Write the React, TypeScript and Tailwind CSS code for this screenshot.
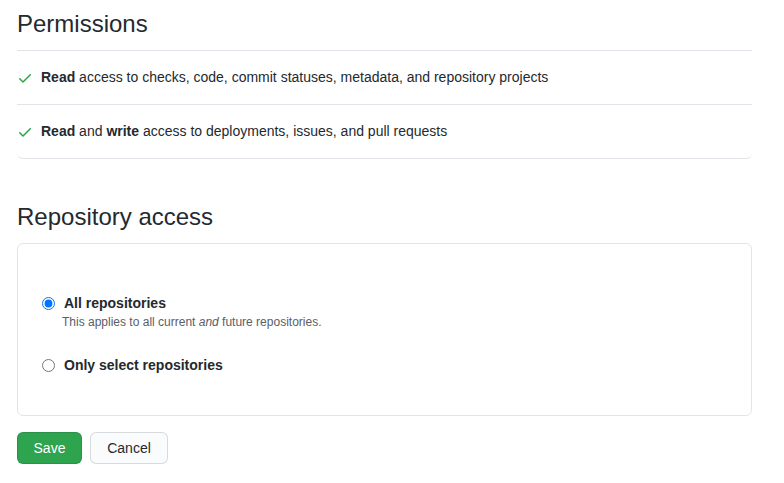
import React from "react";

const CheckIcon: React.FC = () => (
  <svg
    width="16"
    height="16"
    viewBox="0 0 16 16"
    className="shrink-0 text-[#28a745]"
    fill="currentColor"
  >
    <path d="M13.78 4.22a.75.75 0 0 1 0 1.06l-7.25 7.25a.75.75 0 0 1-1.06 0L2.22 9.28a.75.75 0 0 1 1.06-1.06L6 10.94l6.72-6.72a.75.75 0 0 1 1.06 0Z" />
  </svg>
);

const App: React.FC = () => {
  return (
    <div
      className="w-[784px] bg-white px-[17px] text-[14px] text-[#24292e]"
      style={{ fontFamily: '"Liberation Sans", Arial, sans-serif' }}
    >
      <div className="w-[735px]">
        <div className="flex h-[51px] items-start border-b border-[#e1e4e8] pt-[9px]">
          <h2 className="text-[24px] leading-[30px] font-normal">Permissions</h2>
        </div>
        <ul className="rounded-b-md border-b border-[#e1e4e8]">
          <li className="flex h-[54px] items-center gap-[8px] border-b border-[#e1e4e8]">
            <CheckIcon />
            <span>
              <strong className="font-bold">Read</strong> access to checks,
              code, commit statuses, metadata, and repository projects
            </span>
          </li>
          <li className="flex h-[53px] items-center gap-[8px]">
            <CheckIcon />
            <span>
              <strong className="font-bold">Read</strong> and{" "}
              <strong className="font-bold">write</strong> access to
              deployments, issues, and pull requests
            </span>
          </li>
        </ul>

        <h2 className="mt-[43px] text-[24px] leading-[30px] font-normal">
          Repository access
        </h2>
        <div className="mt-[11px] h-[173px] rounded-md border border-[#e1e4e8] px-[24px] pt-[49px]">
          <label className="flex h-[20px] items-center">
            <input
              type="radio"
              name="repo"
              defaultChecked
              className="m-0 h-[13px] w-[13px] accent-[#0075ff]"
            />
            <span className="ml-[9px] font-bold">All repositories</span>
          </label>
          <p className="ml-[20px] text-[12px] leading-[18px] text-[#586069]">
            This applies to all current <em>and</em> future repositories.
          </p>
          <label className="mt-[24px] flex h-[20px] items-center">
            <input
              type="radio"
              name="repo"
              className="m-0 h-[13px] w-[13px]"
            />
            <span className="ml-[9px] font-bold">Only select repositories</span>
          </label>
        </div>

        <div className="mt-[16px] flex gap-[8px] pb-[20px]">
          <button className="h-[32px] w-[65px] rounded-md border border-[rgba(27,31,35,0.15)] bg-[#2ea44f] text-[14px] text-white">
            Save
          </button>
          <button className="h-[32px] w-[78px] rounded-md border border-[rgba(27,31,35,0.15)] bg-[#fafbfc] text-[14px] text-[#24292e]">
            Cancel
          </button>
        </div>
      </div>
    </div>
  );
};

export default App;
